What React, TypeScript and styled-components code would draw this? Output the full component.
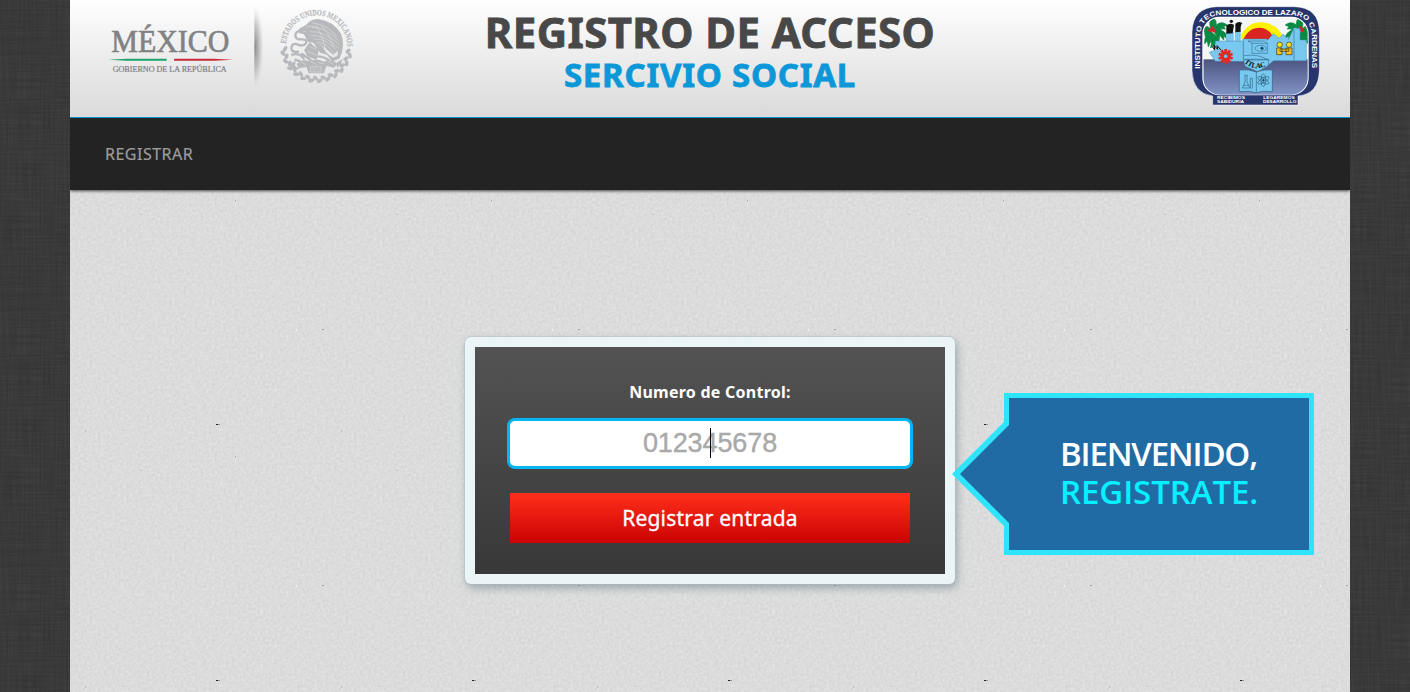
import React from "react";
import styled, { createGlobalStyle } from "styled-components";

const svgUrl = (svg: string) => `url("data:image/svg+xml,${encodeURIComponent(svg)}")`;

const paper = svgUrl(`<svg xmlns="http://www.w3.org/2000/svg" width="256" height="256">
<filter id="n" x="0" y="0" width="100%" height="100%" color-interpolation-filters="sRGB"><feTurbulence type="fractalNoise" baseFrequency="0.35" numOctaves="3" seed="4" stitchTiles="stitch"/><feColorMatrix values="0.085 0 0 0 0.82  0.085 0 0 0 0.82  0.085 0 0 0 0.82  0 0 0 0 1"/></filter>
<rect width="256" height="256" fill="#dcdcdc"/><rect width="256" height="256" filter="url(#n)"/>
<rect x="146" y="234" width="2" height="1" fill="#222"/><rect x="148" y="234" width="2" height="1" fill="#999"/>
<rect x="15" y="240" width="1" height="2" fill="#bbb"/><rect x="252" y="139" width="2" height="1" fill="#a4a4a4"/><rect x="226" y="139" width="1" height="2" fill="#f2f2f2"/><rect x="52" y="240" width="1" height="1" fill="#bbb"/><rect x="71" y="24" width="1" height="1" fill="#aaa"/><rect x="165" y="10" width="1" height="1" fill="#999"/></svg>`);

const linen = svgUrl(`<svg xmlns="http://www.w3.org/2000/svg" width="256" height="256">
<filter id="v" x="0" y="0" width="100%" height="100%" color-interpolation-filters="sRGB"><feTurbulence type="fractalNoise" baseFrequency="0.5 0.02" numOctaves="2" seed="3" stitchTiles="stitch"/><feColorMatrix values="0.1 0 0 0 0.175  0.1 0 0 0 0.175  0.1 0 0 0 0.175  0 0 0 0 1"/></filter>
<filter id="h" x="0" y="0" width="100%" height="100%" color-interpolation-filters="sRGB"><feTurbulence type="fractalNoise" baseFrequency="0.02 0.5" numOctaves="2" seed="8" stitchTiles="stitch"/><feColorMatrix values="0.1 0 0 0 0.175  0.1 0 0 0 0.175  0.1 0 0 0 0.175  0 0 0 0 0.5"/></filter>
<rect width="256" height="256" filter="url(#v)"/><rect width="256" height="256" filter="url(#h)"/></svg>`);

const GlobalStyle = createGlobalStyle`
  * { box-sizing: border-box; }
  html, body { margin: 0; height: 100%; overflow: hidden; }
  body { background: #393939 ${linen}; font-family: "Noto Sans", sans-serif; }
`;

const Page = styled.div`
  display: flex;
  flex-direction: column;
  width: 1280px;
  height: 692px;
  margin-left: 70px;
  background: #dcdcdc ${paper} 0 190px;
`;

const Header = styled.header`
  display: grid;
  grid-template-columns: 270px 1fr 138px;
  height: 117px;
  padding: 0 25px 0 30px;
  background: linear-gradient(#fefefe, #dadada);
`;

const Titles = styled.div`
  display: flex;
  flex-direction: column;
  align-items: center;
  padding-top: 8px;
  margin-right: 137px;
`;

const Heading = styled.h1`
  margin: 0;
  font-size: 42px;
  line-height: 48px;
  font-weight: 700;
  letter-spacing: 0.4px;
  -webkit-text-stroke: 0.8px #484848;
  white-space: nowrap;
  color: #484848;
`;

const Subheading = styled.h2`
  margin: 0;
  font-size: 33px;
  line-height: 38px;
  font-weight: 700;
  letter-spacing: 0.75px;
  -webkit-text-stroke: 0.8px #0c98d8;
  white-space: nowrap;
  color: #0c98d8;
`;

const Nav = styled.nav`
  display: flex;
  align-items: center;
  height: 73px;
  flex: none;
  padding-left: 35px;
  border-top: 1px solid #0c8fc9;
  background: #232323;
  box-shadow: 0 1px 3px rgba(0, 0, 0, 0.7);
  clip-path: inset(0 0 -8px 0);
`;

const NavLink = styled.a`
  font-size: 16px;
  letter-spacing: 0.5px;
  -webkit-text-stroke: 0.2px #9d9d9d;
  color: #9d9d9d;
`;

const Main = styled.main`
  flex: 1;
  display: flex;
  justify-content: center;
  align-items: flex-start;
  padding-top: 147px;
`;

const Card = styled.section`
  position: relative;
  padding: 10px;
  border-radius: 6px;
  background: #ebf4f7;
  box-shadow: 0 0 0 1px rgba(170, 190, 195, 0.45), 2px 4px 8px rgba(90, 115, 120, 0.5);
`;

const Form = styled.form`
  display: flex;
  flex-direction: column;
  align-items: stretch;
  width: 470px;
  height: 227px;
  padding: 33px 35px 0;
  background: linear-gradient(#535353, #383838);
`;

const Label = styled.label`
  height: 24px;
  line-height: 24px;
  font-size: 16px;
  font-weight: 700;
  letter-spacing: 0.25px;
  text-align: center;
  color: #fff;
`;

const Field = styled.div`
  position: relative;
  height: 45px;
  margin-top: 17px;
`;

const Input = styled.input`
  width: 100%;
  height: 45px;
  padding: 0;
  border: 0;
  border-radius: 5px;
  background: #fff;
  box-shadow: 0 0 0 3px #04b5f1;
  font: 27px "Liberation Sans", sans-serif;
  letter-spacing: -0.1px;
  text-align: center;
  &::placeholder { color: #a9a9a9; opacity: 1; -webkit-text-stroke: 0.4px #a9a9a9; }
`;

const Caret = styled.span`
  position: absolute;
  left: 200px;
  top: 7px;
  width: 1px;
  height: 30px;
  background: #000;
`;

const Submit = styled.button`
  height: 50px;
  margin-top: 27px;
  padding: 0;
  border: 0;
  background: linear-gradient(#ff2f1b, #cb0202);
  font: 21px "Noto Sans", sans-serif;
  letter-spacing: 0.2px;
  -webkit-text-stroke: 0.3px #fff;
  color: #fff;
`;

const Callout = styled.aside`
  position: absolute;
  left: 539px;
  top: 56px;
  width: 310px;
  height: 162px;
  padding: 37px 0 0 51px;
  border: 5px solid #2ee4fa;
  background: #206ba4;
  font-family: "Open Sans", sans-serif;
  font-weight: 600;
  font-size: 33px;
  line-height: 38px;
  white-space: nowrap;
  color: #fff;

  &::before, &::after {
    content: "";
    position: absolute;
    clip-path: polygon(100% 0, 100% 100%, 0 50%);
  }
  &::before {
    left: -57px;
    top: 19px;
    width: 57px;
    height: 114px;
    background: #2ee4fa;
    clip-path: polygon(52px 5px, 57px 5px, 57px 109px, 52px 109px, 0 57px);
  }
  &::after {
    left: -49px;
    top: 26px;
    width: 50px;
    height: 100px;
    background: #206ba4;
  }
`;

const CalloutLine = styled.span<{ $color: string; $tracking: number }>`
  display: block;
  color: ${(p) => p.$color};
  letter-spacing: ${(p) => p.$tracking}px;
`;

const polar = (cx: number, cy: number, r: number, deg: number) => {
  const a = (deg * Math.PI) / 180;
  return [cx + r * Math.cos(a), cy + r * Math.sin(a)];
};

function GovernmentLogo() {
  const leaves = [];
  for (let i = 0; i < 25; i++) {
    const deg = 8 + i * 7;
    const [x, y] = polar(770, 140, i % 2 ? 103 : 95, deg);
    leaves.push(
      <ellipse key={i} cx={x} cy={y} rx={9} ry={5.5} transform={`rotate(${deg + (i % 2 ? 60 : 125)} ${x} ${y})`} />
    );
  }
  return (
    <svg width="270" height="100" viewBox="120 0 810 300" aria-label="México, Gobierno de la República">
      <defs>
        <radialGradient id="fold" cx="583" cy="142" r="1" gradientUnits="userSpaceOnUse" gradientTransform="translate(583 142) scale(28 124) translate(-583 -142)">
          <stop offset="0" stopColor="#707070" stopOpacity=".85" />
          <stop offset=".6" stopColor="#909090" stopOpacity=".4" />
          <stop offset="1" stopColor="#bbb" stopOpacity="0" />
        </radialGradient>
        <path id="sealArc" d="M678 131 A92 92 0 0 1 770 46 A92 92 0 0 1 861 150" />
      </defs>
      <g fill="#808284" fontFamily="Liberation Serif, serif">
        <text x="154" y="157" fontSize="97" textLength="354" lengthAdjust="spacingAndGlyphs" stroke="#808284" strokeWidth="2">MÉXICO</text>
        <text x="158" y="216" fontSize="26" textLength="342" lengthAdjust="spacingAndGlyphs" stroke="#808284" strokeWidth=".7">GOBIERNO DE LA REPÚBLICA</text>
      </g>
      <path d="M144 179 L200 176 H320 V182 H200Z" fill="#1ba366" />
      <path d="M342 176 H462 L519 179 L462 182 H342Z" fill="#c92b38" />
      <rect x="583" y="14" width="32" height="254" fill="url(#fold)" />
      <g fill="#b7b9bc">
        <text fontFamily="Liberation Serif, serif" fontWeight="700" fontSize="25" stroke="#b7b9bc" strokeWidth=".6">
          <textPath href="#sealArc" textLength="284" lengthAdjust="spacingAndGlyphs">ESTADOS UNIDOS MEXICANOS</textPath>
        </text>
        {leaves}
        <path d="M738 75 Q753 55 775 57 Q820 63 843 101 Q857 134 839 175 L817 185 L801 164 L780 158 L761 129 L743 125 L732 103 L716 99 L717 86Z" />
        <path d="M749 127 L776 150 L770 179 L743 170 L732 151Z" />
        <path d="M710 192 Q728 174 747 184 Q768 172 792 185 Q811 174 833 191 L822 203 L800 197 L791 220 H746 L739 201 L716 205Z" />
        <path d="M692 190 l15 -8 l-2 16 l15 9 l-15 2 l-12 -8Z M830 188 l17 -11 l-4 15 l-12 12Z" />
      </g>
      <g fill="none" stroke="#b7b9bc" strokeWidth="7" strokeLinecap="round">
        <path d="M733 92 Q708 90 706 105 Q706 119 722 118 Q743 117 738 130 Q730 141 712 133 Q696 127 694 145 Q696 158 714 155" />
        <path d="M696 164 Q720 158 731 176 M726 162 L752 180 M760 170 Q786 166 806 180 M706 179 L735 190" />
      </g>
      <g fill="none" stroke="#e7e7e7" strokeWidth="1.5">
        <path d="M738 82 Q756 72 771 86 M757 69 Q802 74 831 110 M753 81 Q797 81 836 122 M749 95 Q791 91 838 134 M753 107 Q791 101 837 146 M761 117 Q801 113 835 158 M771 127 Q803 127 829 170 M784 77 Q812 107 821 142 M769 75 Q791 111 797 151" />
        <path d="M780 133 L811 169 L825 162 M750 140 L769 149 M742 154 L770 166 M729 94 h8 M722 185 l16 10 M753 185 l18 9 M775 187 l17 5 M803 184 l18 9" />
        <path d="M752 200 h31 v16 h-31Z M758 203 l5 9 l5 -9 M772 203 l6 9" />
      </g>
      <path d="M789 138 L820 165 L832 154 L834 165 L820 173 L799 158Z" fill="#e9e9e9" />
    </svg>
  );
}

function Palm({ mirror }: { mirror?: boolean }) {
  return (
    <g transform={mirror ? "translate(458 0) scale(-1 1)" : undefined}>
      <g fill="#0b8a43" stroke="#0b8a43" strokeWidth="2.5">
        <path d="M94 91 Q81 58 103 57 Q113 63 105 91Z M96 93 Q116 55 142 75 L131 80 L136 87 L121 86 L128 95 L109 93Z" />
        <path d="M103 91 Q141 87 143 118 L132 108 L131 120 L119 105 L117 120 L106 103Z M91 93 Q73 103 74 131 L82 122 L85 140 L93 122 L99 138 L102 103Z" />
        <path d="M76 110 L73 88 Q79 70 95 91Z M102 103 Q125 121 119 146 L109 132 L103 148 L98 129 L92 144Z" />
      </g>
      <g fill="#d5252b"><circle cx="91" cy="91" r="6" /><circle cx="102" cy="92" r="5.5" /><circle cx="96" cy="83" r="4.5" /></g>
    </g>
  );
}

function InstituteCrest() {
  const teeth = Array.from({ length: 10 }, (_, i) => (
    <rect key={i} x="133" y="147" width="8" height="10" transform={`rotate(${i * 36} 137 169)`} />
  ));
  return (
    <svg width="138" height="110" viewBox="21 0 414 330" aria-label="Instituto Tecnológico de Lázaro Cárdenas">
      <defs>
        <linearGradient id="sea" x1="0" y1="0" x2="0" y2="1"><stop offset="0" stopColor="#4d5482" /><stop offset="1" stopColor="#8195c6" /></linearGradient>
        <path id="crestBand" d="M61 206 V108 Q63 47 124 45 H332 Q393 47 395 108 V222" />
        <clipPath id="shield"><rect x="70" y="53" width="313" height="231" rx="50" /></clipPath>
      </defs>
      <path d="M112 20 H342 Q418 22 418 96 V212 Q416 282 354 288 V315 H98 V288 Q38 280 36 212 V96 Q38 22 112 20Z" fill="#27356d" stroke="#fff" strokeWidth="1.5" />
      <rect x="69" y="52" width="315" height="232" rx="50" fill="#f4f5f7" stroke="#fff" strokeWidth="4" />
      <g clipPath="url(#shield)">
        <rect x="70" y="178" width="314" height="108" fill="url(#sea)" />
        <path d="M184 103 Q206 63 248 67 Q300 75 310 116 H184Z" fill="#fff100" />
        <path d="M189 121 Q204 83 239 83 Q271 84 284 121Z" fill="#db2521" />
        <Palm /><Palm mirror />
        <path d="M106 123 H188 V117 H261 V122 L280 101 L298 115 L309 102 L325 119 L342 83 L360 86 V120 H379 V182 H281 L258 200 L235 211 L191 184 H106 L88 157 L104 151Z" fill="#79c8ef" stroke="#3d8cb5" strokeWidth="1.5" />
        <path d="M138 97 L160 97 L160 123 H138Z M166 94 L181 92 V124 H166Z" fill="#79c8ef" stroke="#3d8cb5" />
        <g fill="#111"><circle cx="154" cy="64" r="5" /><path d="M139 77 Q150 66 162 75 L158 100 L139 101Z M166 71 Q177 62 187 70 Q181 73 182 95 L166 97Z" /><path d="M94 137 l10 12 l-2 -13 l11 12 l-2 -11 l13 14" fill="none" stroke="#111" strokeWidth="3" /></g>
      </g>
      <g fill="#e42a20">{teeth}<circle cx="137" cy="169" r="15" /></g><circle cx="137" cy="169" r="6" fill="#79c8ef" stroke="#812" strokeWidth="1" />
      <g fill="none" stroke="#164966" strokeWidth="1.3">
        <path d="M190 123 V178 M216 130 H262 V160 H216Z M216 130 L204 123 H253 L262 130 M190 167 Q236 161 263 179 M190 178 H267 M342 88 V181" />
        <ellipse cx="242" cy="145" rx="17" ry="9" /><circle cx="246" cy="145" r="4" fill="#164966" />
      </g>
      <g stroke="#3a3414" strokeWidth="2"><path d="M290 144 H306 V164 H290Z M318 144 H336 V164 H318Z M300 147 H327 V154 H300Z" fill="#f4c51d" /><circle cx="299" cy="134" r="8" fill="#ffe11e" /><circle cx="327" cy="134" r="8" fill="#ffe11e" /></g>
      <path d="M190 180 H267 L264 198 L233 215 L195 199Z" fill="#79c8ef" stroke="#164966" strokeWidth="1.2" />
      <path id="ship" d="M194 190 Q231 218 268 192" fill="none" />
      <text fontFamily="Liberation Serif, serif" fontWeight="700" fontSize="22" fill="#111"><textPath href="#ship" textLength="68">ITLAC</textPath></text>
      <path d="M178 210 Q207 207 229 216 Q252 207 277 210 V275 Q248 271 229 278 Q209 271 178 275Z" fill="#79c8ef" stroke="#164966" strokeWidth="1.5" />
      <g fill="none" stroke="#164966" strokeWidth="1.5"><path d="M229 216 V276 M193 226 H203 M195 227 V246 L187 264 H210 L201 246 V227 M191 256 H207 M211 235 V263 Q214 269 217 263 V235Z" />
        {[0, 60, 120].map((r) => <ellipse key={r} cx="250" cy="241" rx="19" ry="7" transform={`rotate(${r + 30} 250 241)`} />)}<circle cx="250" cy="241" r="3" fill="#164966" /></g>
      <g fill="#fff" fontFamily="Liberation Sans, sans-serif" fontWeight="700">
        <text fontSize="20.5"><textPath href="#crestBand" textLength="604" lengthAdjust="spacingAndGlyphs">INSTITUTO TECNOLOGICO DE LAZARO CARDENAS</textPath></text>
        <g fontSize="12">
          <text x="111" y="298" textLength="84" lengthAdjust="spacingAndGlyphs">RECIBIMOS</text>
          <text x="111" y="310" textLength="81" lengthAdjust="spacingAndGlyphs">SABIDURIA</text>
          <text x="250" y="298" textLength="94" lengthAdjust="spacingAndGlyphs">LEGAREMOS</text>
          <text x="249" y="310" textLength="100" lengthAdjust="spacingAndGlyphs">DESARROLLO</text>
        </g>
      </g>
    </svg>
  );
}

export default function App() {
  return (
    <>
      <GlobalStyle />
      <Page>
        <Header>
          <GovernmentLogo />
          <Titles>
            <Heading>REGISTRO DE ACCESO</Heading>
            <Subheading>SERCIVIO SOCIAL</Subheading>
          </Titles>
          <InstituteCrest />
        </Header>
        <Nav><NavLink>REGISTRAR</NavLink></Nav>
        <Main>
          <Card>
            <Form>
              <Label htmlFor="control">Numero de Control:</Label>
              <Field>
                <Input id="control" placeholder="012345678" />
                <Caret />
              </Field>
              <Submit type="button">Registrar entrada</Submit>
            </Form>
            <Callout>
              <CalloutLine $color="#fff" $tracking={-1.2}>BIENVENIDO,</CalloutLine>
              <CalloutLine $color="#06f0ff" $tracking={-0.1}>REGISTRATE.</CalloutLine>
            </Callout>
          </Card>
        </Main>
      </Page>
    </>
  );
}
